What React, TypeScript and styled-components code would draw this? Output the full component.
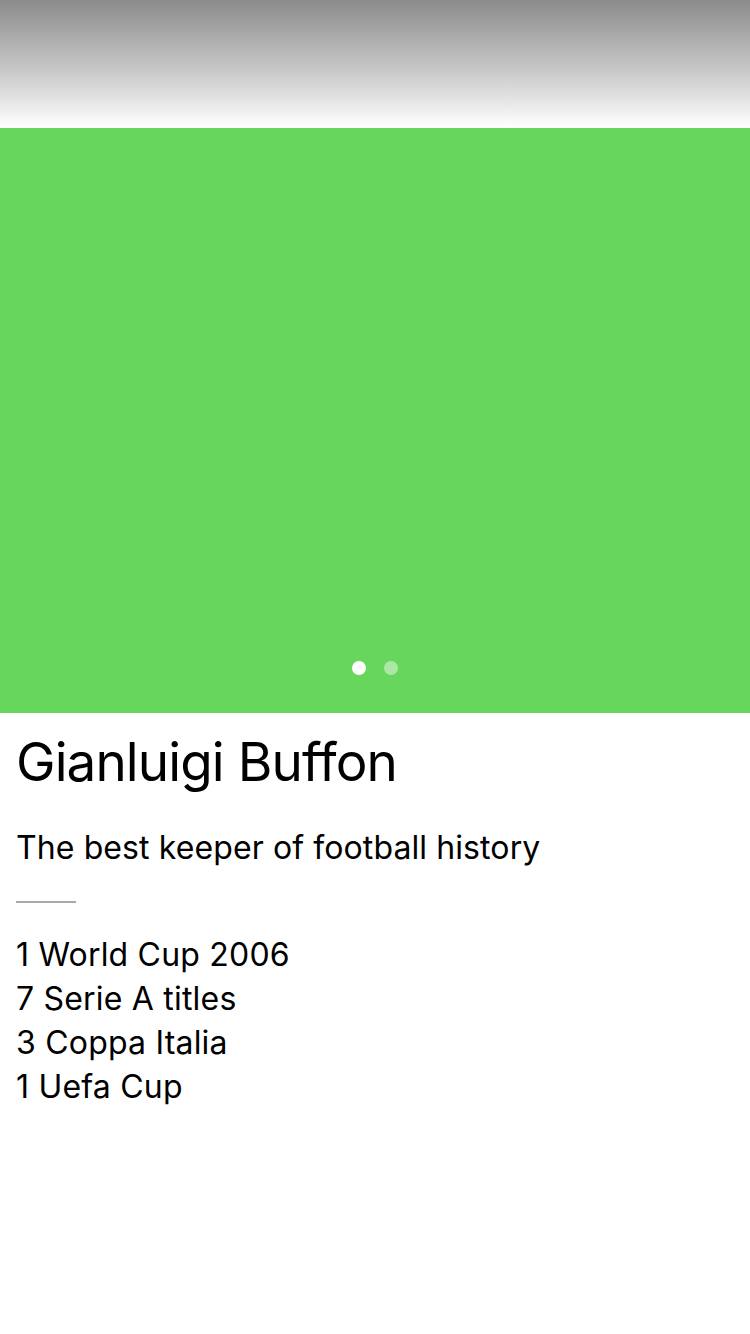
import React from "react";
import styled, { createGlobalStyle } from "styled-components";

const Global = createGlobalStyle`
  html, body { margin: 0; padding: 0; background: #fff; }
  body { font-family: Inter, "Noto Sans", sans-serif; color: #000; }
`;

const Page = styled.div`
  width: 750px;
  min-height: 1334px;
  display: flex;
  flex-direction: column;
  background: #fff;
`;

const Header = styled.div`
  height: 128px;
  background: linear-gradient(to bottom, #8b8b8b 0%, #c8c8c8 55%, #ffffff 100%);
`;

const Slide = styled.div`
  height: 585px;
  background: #67d65d;
  display: flex;
  align-items: flex-end;
  justify-content: center;
  padding-bottom: 38px;
  box-sizing: border-box;
`;

const Dots = styled.div`
  display: flex;
  gap: 18px;
`;

const Dot = styled.span<{ $active?: boolean }>`
  width: 14px;
  height: 14px;
  border-radius: 50%;
  background: ${(p) => (p.$active ? "#ffffff" : "rgba(255,255,255,0.45)")};
`;

const Content = styled.div`
  padding: 17px 16px 0 16px;
  display: flex;
  flex-direction: column;
`;

const Title = styled.h1`
  margin: 0;
  font-size: 53px;
  font-weight: 400;
  line-height: 64px;
  letter-spacing: -0.9px;
`;

const Subtitle = styled.p`
  margin: 34px 0 0 0;
  font-size: 32px;
  line-height: 40px;
  font-weight: 400;
  letter-spacing: 0.1px;
`;

const Divider = styled.div`
  width: 60px;
  height: 2px;
  background: #aaaaaa;
  margin-top: 33px;
`;

const List = styled.div`
  margin-top: 30px;
  display: flex;
  flex-direction: column;
`;

const Item = styled.div`
  font-size: 32px;
  line-height: 44px;
  letter-spacing: 0.2px;
`;

export default function App() {
  return (
    <Page>
      <Global />
      <Header />
      <Slide>
        <Dots>
          <Dot $active />
          <Dot />
        </Dots>
      </Slide>
      <Content>
        <Title>Gianluigi Buffon</Title>
        <Subtitle>The best keeper of football history</Subtitle>
        <Divider />
        <List>
          <Item>1 World Cup 2006</Item>
          <Item>7 Serie A titles</Item>
          <Item>3 Coppa Italia</Item>
          <Item>1 Uefa Cup</Item>
        </List>
      </Content>
    </Page>
  );
}
